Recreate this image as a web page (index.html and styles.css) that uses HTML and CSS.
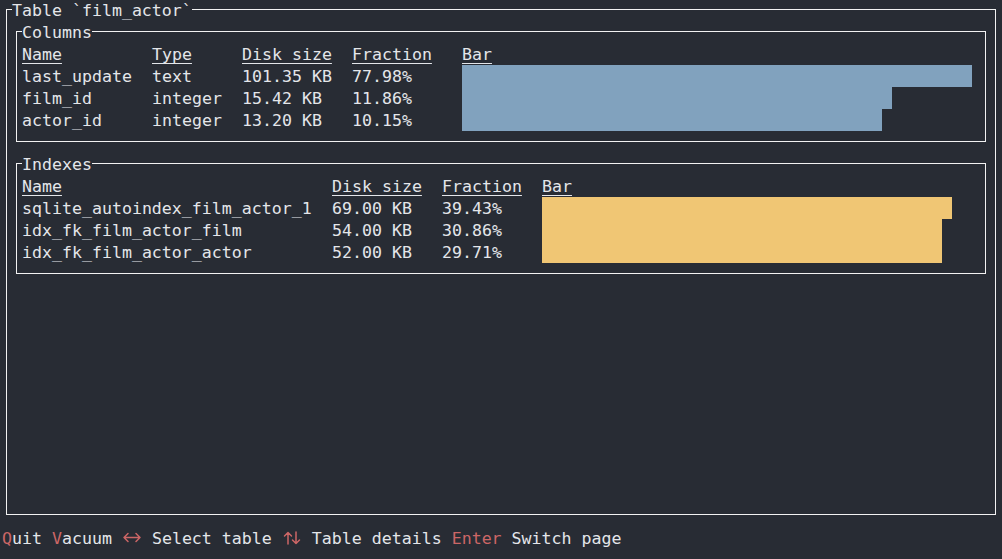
FILE: index.html
```html
<!DOCTYPE html>
<html>
<head>
<meta charset="utf-8">
<link rel="stylesheet" href="styles.css">
</head>
<body>
<div class="screen">
  <div class="frame">
    <div class="frame-title">Table `film_actor`</div>

    <section class="panel">
      <div class="panel-title">Columns</div>
      <div class="row cols-grid head">
        <span><u>Name</u></span><span><u>Type</u></span><span><u>Disk size</u></span><span><u>Fraction</u></span><span><u>Bar</u></span>
      </div>
      <div class="row cols-grid">
        <span>last_update</span><span>text</span><span>101.35 KB</span><span>77.98%</span><span class="bar blue" style="width:510px"></span>
      </div>
      <div class="row cols-grid">
        <span>film_id</span><span>integer</span><span>15.42 KB</span><span>11.86%</span><span class="bar blue" style="width:430px"></span>
      </div>
      <div class="row cols-grid">
        <span>actor_id</span><span>integer</span><span>13.20 KB</span><span>10.15%</span><span class="bar blue" style="width:420px"></span>
      </div>
    </section>

    <section class="panel panel-second">
      <div class="panel-title">Indexes</div>
      <div class="row idx-grid head">
        <span><u>Name</u></span><span><u>Disk size</u></span><span><u>Fraction</u></span><span><u>Bar</u></span>
      </div>
      <div class="row idx-grid">
        <span>sqlite_autoindex_film_actor_1</span><span>69.00 KB</span><span>39.43%</span><span class="bar yellow" style="width:410px"></span>
      </div>
      <div class="row idx-grid">
        <span>idx_fk_film_actor_film</span><span>54.00 KB</span><span>30.86%</span><span class="bar yellow" style="width:400px"></span>
      </div>
      <div class="row idx-grid">
        <span>idx_fk_film_actor_actor</span><span>52.00 KB</span><span>29.71%</span><span class="bar yellow" style="width:400px"></span>
      </div>
    </section>
  </div>

  <div class="status"><span class="key">Q</span>uit <span class="key">V</span>acuum <svg class="glyph" width="20" height="22" viewBox="0 0 20 22" aria-label="↔"><path d="M2 10.5 H18 M6 6.5 L2 10.5 L6 14.5 M14 6.5 L18 10.5 L14 14.5" fill="none" stroke="#cc6666" stroke-width="1.5" stroke-linecap="round" stroke-linejoin="round"/></svg> Select table <svg class="glyph" width="20" height="22" viewBox="0 0 20 22" aria-label="↑↓"><path d="M6 5.5 V17 M2.5 9 L6 5.5 L9.5 9 M14 5 V16.5 M10.5 13 L14 16.5 L17.5 13" fill="none" stroke="#cc6666" stroke-width="1.5" stroke-linecap="round" stroke-linejoin="round"/></svg> Table details <span class="key">Enter</span> Switch page</div>
</div>
</body>
</html>
```

FILE: styles.css
```css
:root {
  --bg: #282c34;
  --fg: #e4e6ea;
  --line: #f2f2f2;
  --red: #cc6666;
}

html, body {
  margin: 0;
  padding: 0;
  background: var(--bg);
}

body {
  color: var(--fg);
  font-family: "DejaVu Sans Mono", "Liberation Mono", monospace;
  font-size: 16.6px;
  line-height: 24px;
}

.screen {
  width: 1002px;
  height: 559px;
  overflow: hidden;
}

.frame {
  margin: 9px 6px 0 6px;
  height: 504px;
  border: 1px solid var(--line);
}

.frame-title {
  width: fit-content;
  height: 22px;
  margin: -11px 0 0 5px;
  background: var(--bg);
  white-space: pre;
}

.panel {
  margin: 10px 9px 0 9px;
  padding: 0 0 10px 5px;
  border: 1px solid var(--line);
}

.panel-second {
  margin-top: 21px;
}

.panel-title {
  width: fit-content;
  height: 22px;
  margin-top: -11px;
  background: var(--bg);
}

.row {
  display: grid;
  height: 22px;
  align-items: start;
  white-space: pre;
}

.cols-grid {
  grid-template-columns: 130px 90px 110px 110px 1fr;
}

.idx-grid {
  grid-template-columns: 310px 110px 100px 1fr;
}

.head u {
  text-decoration: underline;
  text-underline-offset: 3px;
}

.bar {
  display: block;
  height: 22px;
}

.blue {
  background: #81a2be;
}

.yellow {
  background: #f0c674;
}

.status {
  margin-top: 12px;
  padding-left: 2px;
  height: 22px;
  white-space: pre;
}

.key {
  color: var(--red);
}

.glyph {
  display: inline-block;
  vertical-align: top;
}
```
